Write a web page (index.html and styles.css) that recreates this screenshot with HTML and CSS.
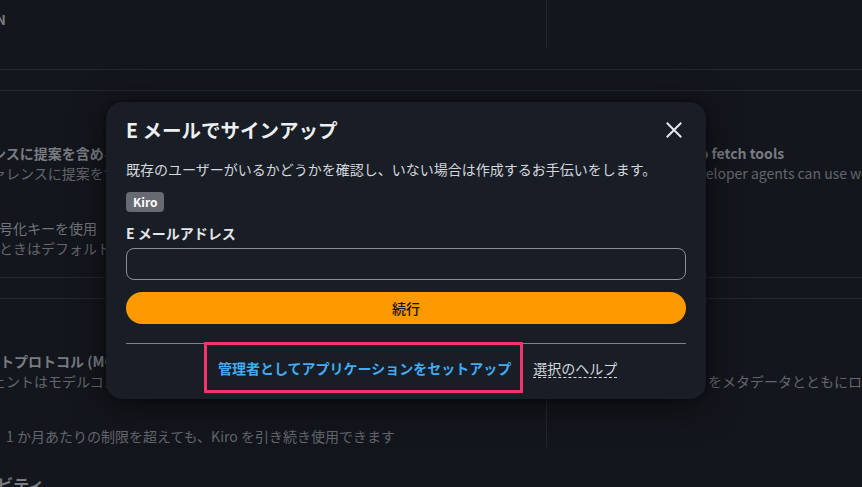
FILE: index.html
```html
<!DOCTYPE html>
<html lang="ja">
<head>
<meta charset="utf-8">
<title>E メールでサインアップ</title>
<link rel="stylesheet" href="styles.css">
</head>
<body>
<div class="page">
  <section class="sec sec-top">
    <div class="col col-left top-left">
      <p class="bg-heading shift-n">ON</p>
    </div>
    <div class="col"></div>
  </section>
  <div class="band"></div>
  <section class="sec sec-mid">
    <div class="col col-mid-left">
      <div class="group shift-a">
        <p class="bg-title">ンスに提案を含める</p>
        <p class="bg-desc">ァレンスに提案を含めます</p>
      </div>
      <div class="group group-b shift-b">
        <p class="bg-label">暗号化キーを使用</p>
        <p class="bg-desc">のときはデフォルトキーを使用します</p>
      </div>
    </div>
    <div class="col col-mid-right">
      <p class="bg-title">to fetch tools</p>
      <p class="bg-desc shift-e">Developer agents can use web fetch</p>
    </div>
  </section>
  <div class="band"></div>
  <section class="sec sec-low">
    <div class="col col-left low-left">
      <p class="bg-title shift-c">ストプロトコル (MCP)</p>
      <p class="bg-desc shift-a">ェントはモデルコンテキスト</p>
      <p class="bg-desc overage">1 か月あたりの制限を超えても、Kiro を引き続き使用できます</p>
    </div>
    <div class="col low-right">
      <p class="bg-desc">をメタデータとともにログ</p>
    </div>
  </section>
  <h3 class="bg-section shift-d">アクティビティ</h3>
</div>

<div class="modal" role="dialog" aria-labelledby="modal-title">
  <div class="modal-header">
    <h2 id="modal-title" class="modal-title">E メールでサインアップ</h2>
    <button class="close" aria-label="閉じる">
      <svg width="16" height="16" viewBox="0 0 16 16" aria-hidden="true">
        <path d="M1.5 1.5 L14.5 14.5 M14.5 1.5 L1.5 14.5" stroke="#e6e8eb" stroke-width="2" stroke-linecap="square" fill="none"/>
      </svg>
    </button>
  </div>
  <p class="modal-desc">既存のユーザーがいるかどうかを確認し、いない場合は作成するお手伝いをします。</p>
  <span class="badge">Kiro</span>
  <label class="field-label" for="email">E メールアドレス</label>
  <input class="field-input" id="email" type="email">
  <button class="primary">続行</button>
  <div class="divider"></div>
  <div class="links">
    <a class="admin-link" href="#">管理者としてアプリケーションをセットアップ</a>
    <a class="help-link" href="#">選択のヘルプ</a>
  </div>
</div>
</body>
</html>
```

FILE: styles.css
```css
html, body {
  margin: 0;
  padding: 0;
  background: #13161c;
}

body {
  font-family: "Noto Sans CJK JP", "Noto Sans", sans-serif;
  position: relative;
  width: 862px;
  height: 487px;
  overflow: hidden;
}

p, h2, h3 {
  margin: 0;
}

.page {
  width: 862px;
  height: 487px;
  overflow: hidden;
  background: #13161c;
  white-space: nowrap;
  font-size: 14px;
  line-height: 20px;
}

.sec {
  display: grid;
  grid-template-columns: 547px 1fr;
}

.col {
  min-width: 0;
}

.col-left {
  box-sizing: border-box;
  border-right: 1px solid #23272e;
}

.sec-top {
  height: 70px;
  box-sizing: border-box;
  border-bottom: 1px solid #23272e;
  align-items: start;
}

.top-left {
  height: 48px;
  padding-top: 10px;
  box-sizing: border-box;
}

.band {
  height: 21px;
  box-sizing: border-box;
  border-bottom: 1px solid #23272e;
}

.sec-mid {
  height: 187px;
  box-sizing: border-box;
  border-bottom: 1px solid #23272e;
}

.col-mid-left {
  padding-top: 52px;
}

.group-b {
  margin-top: 35px;
}

.col-mid-right {
  padding-top: 52px;
  padding-left: 147px;
}

.low-left {
  padding-top: 52px;
  padding-bottom: 1px;
}

.low-right {
  padding-top: 72px;
  padding-left: 161px;
}

.overage {
  margin-top: 35px;
  margin-left: 6px;
}

.bg-heading {
  font-size: 13px;
  font-weight: 700;
  color: #7b7e84;
}

.bg-title {
  font-weight: 700;
  color: #797c82;
}

.bg-label {
  color: #72757b;
}

.bg-desc {
  color: #63666c;
}

.bg-section {
  margin: 26px 0 0;
  font-size: 16px;
  line-height: 22px;
  font-weight: 700;
  color: #797c82;
}

.shift-n { margin-left: -14px; }
.shift-a { margin-left: -8px; }
.shift-b { margin-left: -15px; }
.shift-c { margin-left: -14px; }
.shift-d { margin-left: -65px; }
.shift-e { margin-left: -13px; }

/* Modal */
.modal {
  position: absolute;
  left: 106px;
  top: 102px;
  width: 600px;
  box-sizing: border-box;
  padding: 14px 20px 0;
  background: #181d26;
  border-radius: 16px;
  box-shadow: 0 6px 36px rgba(0, 0, 0, 0.55), 0 0 4px rgba(0, 0, 0, 0.4);
  color: #e6e8eb;
  display: flex;
  flex-direction: column;
  align-items: flex-start;
}

.modal-header {
  align-self: stretch;
  display: flex;
  align-items: center;
  justify-content: space-between;
  height: 28px;
}

.modal-title {
  font-size: 19.5px;
  line-height: 28px;
  font-weight: 700;
  color: #eceef0;
}

.close {
  display: flex;
  padding: 0;
  margin: 0 4px 0 0;
  border: 0;
  background: none;
}

.modal-desc {
  margin-top: 15px;
  font-size: 14px;
  line-height: 20px;
  color: #d4d7dc;
}

.badge {
  margin-top: 13px;
  height: 20px;
  padding: 0 7px;
  border-radius: 4px;
  background: #676a73;
  color: #ffffff;
  font-size: 12px;
  line-height: 20px;
  font-weight: 700;
}

.field-label {
  margin-top: 11px;
  font-size: 14px;
  line-height: 20px;
  font-weight: 700;
  color: #e3e5e8;
}

.field-input {
  margin-top: 5px;
  align-self: stretch;
  height: 32px;
  box-sizing: border-box;
  border: 1px solid #8a8e97;
  border-radius: 8px;
  background: transparent;
  color: #e6e8eb;
  font: inherit;
  padding: 0 12px;
}

.primary {
  margin-top: 12px;
  align-self: stretch;
  height: 32px;
  border: 0;
  border-radius: 16px;
  background: #ff9900;
  color: #0f141a;
  font-family: inherit;
  font-size: 14px;
  font-weight: 500;
  line-height: 20px;
}

.divider {
  margin-top: 19px;
  align-self: stretch;
  height: 1px;
  background: #7f828a;
}

.links {
  display: flex;
  gap: 22px;
  padding: 14px 0 21px 92px;
  font-size: 14px;
  line-height: 20px;
}

.admin-link {
  position: relative;
  color: #42abf2;
  font-weight: 700;
  text-decoration: none;
}

.admin-link::after {
  content: "";
  position: absolute;
  left: -14px;
  right: -12px;
  top: -16px;
  bottom: -15px;
  border: 3px solid #f4336c;
}

.help-link {
  color: #d5d8dc;
  text-decoration: underline dashed 1px;
  text-underline-offset: 3px;
}
```
